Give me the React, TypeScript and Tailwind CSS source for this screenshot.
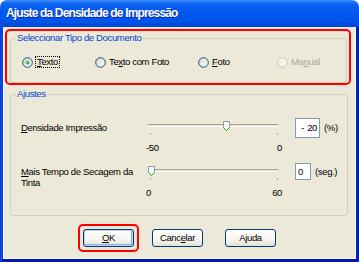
import React from "react";

const F = "font-['Liberation_Sans',Arial,sans-serif] text-[9.5px] tracking-[-0.35px]";

function U({ c }: { c: string }) {
  return <span className="underline decoration-1 underline-offset-[1px]">{c}</span>;
}

function Radio({ checked, disabled }: { checked?: boolean; disabled?: boolean }) {
  return (
    <svg width="11" height="11" viewBox="0 0 11 11" className="shrink-0">
      <defs>
        <linearGradient id="rg" x1="0" y1="0" x2="1" y2="1">
          <stop offset="0" stopColor="#D8D7CF" />
          <stop offset="1" stopColor="#FFFFFF" />
        </linearGradient>
        <radialGradient id="rd" cx="0.4" cy="0.4" r="0.6">
          <stop offset="0" stopColor="#8EE08A" />
          <stop offset="1" stopColor="#21A121" />
        </radialGradient>
      </defs>
      <circle
        cx="5.5"
        cy="5.5"
        r="4.8"
        fill={disabled ? "#F4F3EC" : "url(#rg)"}
        stroke={disabled ? "#CAC8BB" : "#1C5180"}
        strokeWidth="1"
      />
      {checked && <circle cx="5.5" cy="5.5" r="2" fill="url(#rd)" />}
    </svg>
  );
}

function Thumb() {
  return (
    <svg width="7" height="10" viewBox="0 0 7 10">
      <path d="M0.5 0.5 H6.5 V6.5 L3.5 9.5 L0.5 6.5 Z" fill="#F7F7F4" stroke="#8C9BA8" />
      <path d="M0.5 6.5 L3.5 9.5 L6.5 6.5" fill="none" stroke="#21A121" />
    </svg>
  );
}

function Slider({ left, min, max }: { left: string; min: string; max: string }) {
  return (
    <div className="relative w-[136px] shrink-0">
      <div className="ml-[2px] mt-[7px] h-[3px] w-[131px] rounded-full border-t border-b border-t-[#A5A497] border-b-[#FFFFFF] bg-[#E4E2D8]" />
      <div className={"absolute top-[4px] " + left}>
        <Thumb />
      </div>
      <div className="mt-[6px] flex h-[2px] justify-between pl-[4px] pr-[4px]">
        <div className="h-[2px] w-[1px] bg-[#A5A497]" />
        <div className="h-[2px] w-[1px] bg-[#A5A497]" />
      </div>
      <div className="mt-[7px] flex h-[12px] items-center justify-between leading-[12px] text-black">
        <span>{min}</span>
        <span>{max}</span>
      </div>
    </div>
  );
}

function Btn({ children, def }: { children: React.ReactNode; def?: boolean }) {
  return (
    <div
      className={
        "flex h-[18px] items-center justify-center rounded-[3px] border border-[#003C74] bg-[linear-gradient(180deg,#FFFFFF_0%,#F6F5F0_60%,#E3E0D6_100%)] leading-[12px] text-black " +
        (def ? "w-[51px] shadow-[inset_0_0_0_1px_#BFD2F5,inset_-1px_-1px_0_1px_#8AAEE6]" : "w-[51px]")
      }
    >
      {children}
    </div>
  );
}

export default function App() {
  return (
    <div className={"h-[262px] w-[359px] bg-white " + F}>
      <div className="flex h-full flex-col">
        <div className="flex h-[27px] shrink-0 items-center rounded-t-[7px] bg-[linear-gradient(180deg,#3C8EFF_0%,#0D63F2_14%,#0058EE_45%,#0054EA_80%,#0245D2_100%)] pl-[6px] pb-[1px]">
          <span className="whitespace-nowrap font-['Liberation_Sans',Arial,sans-serif] text-[12px] font-bold tracking-[-0.85px] text-white [text-shadow:1px_1px_0_#0A2A9E]">
            Ajuste da Densidade de Impressão
          </span>
        </div>
        <div className="flex flex-1 flex-col border-b-[3px] border-l-[3px] border-r-[3px] border-b-[#001AA6] border-l-[#0A44DC] border-r-[#0023AE]">
          <div className="flex flex-1 flex-col border-b border-l border-r border-[#FBFAF2] bg-[#ECE9D8]">
            {/* red box 1 */}
            <div className="ml-[1px] mt-[2px] w-[346px] rounded-[5px] border-2 border-[#FF0000] pl-[1px] pt-[1px]">
              <fieldset className="ml-[2px] h-[51px] w-[337px] rounded-[3px] border border-[#D0D0BF] p-0">
                <legend className="ml-[5px] px-[1px] leading-[12px] text-[#0046D5]">
                  Seleccionar Tipo de Documento
                </legend>
                <div className="mt-[12px] flex h-[12px] items-center whitespace-nowrap pl-[11px] leading-[12px] text-black">
                  <div className="flex w-[73px] items-center">
                    <Radio checked />
                    <span className="ml-[2px] border border-dotted border-black px-[1px] leading-[10px]">
                      <U c="T" />exto
                    </span>
                  </div>
                  <div className="flex w-[103px] items-center">
                    <Radio />
                    <span className="ml-[3px]">
                      Te<U c="x" />to com Foto
                    </span>
                  </div>
                  <div className="flex w-[79px] items-center">
                    <Radio />
                    <span className="ml-[3px]">
                      <U c="F" />oto
                    </span>
                  </div>
                  <div className="flex items-center">
                    <Radio disabled />
                    <span className="ml-[3px] text-[#ACA899]">
                      Ma<U c="n" />ual
                    </span>
                  </div>
                </div>
              </fieldset>
            </div>

            {/* Ajustes */}
            <fieldset className="ml-[6px] mt-[3px] h-[128px] w-[338px] rounded-[3px] border border-[#D0D0BF] p-0">
              <legend className="ml-[5px] px-[1px] leading-[12px] text-[#0046D5]">Ajustes</legend>
              <div className="pl-[10px] pt-[17px] text-black">
                <div className="flex h-[45px]">
                  <div className="mt-[5px] w-[125px] shrink-0 whitespace-nowrap leading-[12px]">
                    <U c="D" />ensidade Impressão
                  </div>
                  <Slider left="left-[77px]" min="-50" max="0" />
                  <div className="ml-[13px] mt-[1px] flex h-[20px] w-[25px] items-center justify-end border border-[#7F9DB9] bg-white pr-[2px] leading-[12px]">
                    <span>-</span>
                    <span className="ml-[3px]">20</span>
                  </div>
                  <div className="ml-[4px] mt-[5px] leading-[12px]">(%)</div>
                </div>
                <div className="flex h-[45px]">
                  <div className="mt-[4px] w-[125px] shrink-0 whitespace-nowrap leading-[11px]">
                    <U c="M" />ais Tempo de Secagem da
                    <br />
                    Tinta
                  </div>
                  <Slider left="left-[2px]" min="0" max="60" />
                  <div className="ml-[13px] mt-[1px] flex h-[17px] w-[16px] items-center border border-[#7F9DB9] bg-white pl-[2px] leading-[12px]">
                    0
                  </div>
                  <div className="ml-[4px] mt-[4px] leading-[12px]">(seg.)</div>
                </div>
              </div>
            </fieldset>

            {/* buttons */}
            <div className="ml-[74px] mt-[8px] flex items-center">
              <div className="rounded-[5px] border-2 border-[#FF0000] p-[3px]">
                <Btn def>
                  <U c="O" />K
                </Btn>
              </div>
              <div className="ml-[13px]">
                <Btn>
                  Canc<U c="e" />lar
                </Btn>
              </div>
              <div className="ml-[22px]">
                <Btn>Ajuda</Btn>
              </div>
            </div>
          </div>
        </div>
      </div>
    </div>
  );
}
